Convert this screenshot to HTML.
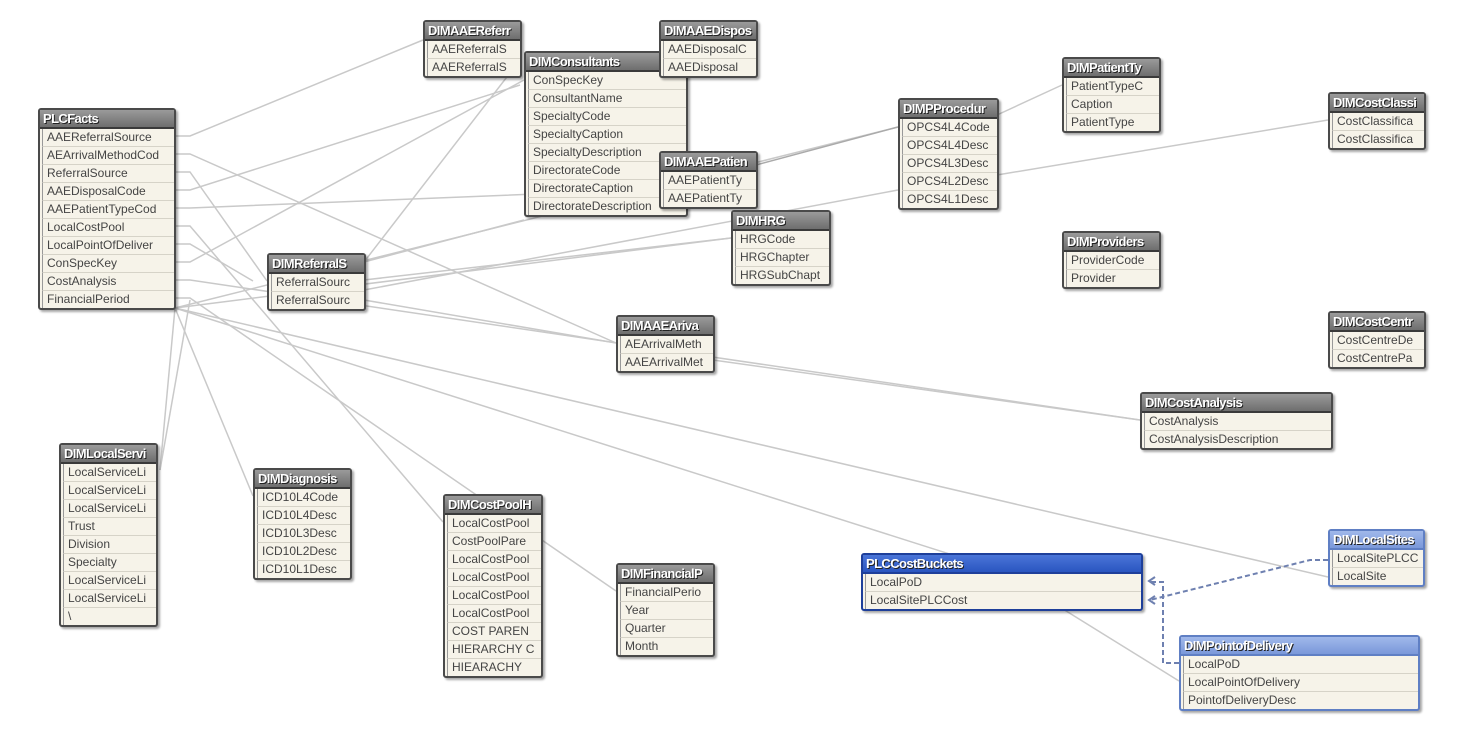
<!DOCTYPE html>
<html><head><meta charset="utf-8"><style>
body{margin:0;width:1462px;height:732px;background:#fff;position:relative;overflow:hidden;font-family:"Liberation Sans",sans-serif}
svg{position:absolute;left:0;top:0}
.t{position:absolute;border:2px solid #4a4a4a;border-radius:3px;background:#f6f3e9;box-shadow:2px 2px 2px rgba(0,0,0,.35)}
.t .h{height:17px;line-height:17px;background:linear-gradient(#9a9a9a,#6e6e6e);color:#fff;font-weight:bold;font-size:13px;padding-left:3px;letter-spacing:-.6px;text-shadow:1px 1px 0 #222;border-bottom:2px solid #3a3a3a;white-space:nowrap;overflow:hidden}
.t .r{height:17px;line-height:17px;border-bottom:1px solid #d6d3c8;font-size:12px;color:#444;padding-left:4px;white-space:nowrap;overflow:hidden;margin-left:2px;border-left:1px solid #999}
.t .r:last-child{border-bottom:none}
.b{border-color:#1e3f9a}
.b .h{background:linear-gradient(#4a75d8,#2a55c0);border-bottom-color:#1e3f9a}
.lb{border-color:#5f7fc4}
.lb .h{background:linear-gradient(#a0b8ea,#7a98da);border-bottom-color:#5f7fc4}
</style></head><body>
<svg width="1462" height="732" fill="none" stroke="#c9c9c9" stroke-width="1.5">
<path d="M175 136H190L423 40"/>
<path d="M175 154H190L616 343"/>
<path d="M175 172H190L267 281"/>
<path d="M175 190H190L520 85"/>
<path d="M175 208H190L659 189"/>
<path d="M175 226H190L443 522"/>
<path d="M175 244H190L253 281"/>
<path d="M175 262H190L524 80"/>
<path d="M175 280H190L1140 420"/>
<path d="M175 298H190L616 591"/>
<path d="M175 308L160 470"/>
<path d="M175 308L253 496"/>
<path d="M175 308L1328 577"/>
<path d="M175 308L1000 570L1179 681"/>
<path d="M175 308L731 238"/>
<path d="M175 308L898 127"/>
<path d="M364 262L524 220"/>
<path d="M364 280L731 238"/>
<path d="M364 290L898 190"/>
<path d="M364 300L616 343"/>
<path d="M997 175L1328 120"/>
<path d="M997 115L1062 85"/>
<path d="M713 360L1140 420"/>
<path d="M756 165L898 127" stroke="#aaa"/>
<path d="M364 262L520 60"/>
<path d="M160 470L190 300"/>
</svg>
<svg width="1462" height="732" fill="none" stroke="#6e80b0" stroke-width="2" stroke-dasharray="5,3">
<path d="M1328 560H1310L1150 600"/>
<path d="M1179 663H1163V582H1150"/>
<path d="M1155 577l-6 4 6 4M1155 596l-6 4 6 4" stroke-dasharray="none"/>
</svg>

<div class="t" style="left:38px;top:108px;width:134px"><div class="h">PLCFacts</div><div class="r">AAEReferralSource</div><div class="r">AEArrivalMethodCod</div><div class="r">ReferralSource</div><div class="r">AAEDisposalCode</div><div class="r">AAEPatientTypeCod</div><div class="r">LocalCostPool</div><div class="r">LocalPointOfDeliver</div><div class="r">ConSpecKey</div><div class="r">CostAnalysis</div><div class="r">FinancialPeriod</div></div>
<div class="t" style="left:423px;top:20px;width:95px"><div class="h">DIMAAEReferr</div><div class="r">AAEReferralS</div><div class="r">AAEReferralS</div></div>
<div class="t" style="left:524px;top:51px;width:160px"><div class="h">DIMConsultants</div><div class="r">ConSpecKey</div><div class="r">ConsultantName</div><div class="r">SpecialtyCode</div><div class="r">SpecialtyCaption</div><div class="r">SpecialtyDescription</div><div class="r">DirectorateCode</div><div class="r">DirectorateCaption</div><div class="r">DirectorateDescription</div></div>
<div class="t" style="left:659px;top:20px;width:95px"><div class="h">DIMAAEDispos</div><div class="r">AAEDisposalC</div><div class="r">AAEDisposal</div></div>
<div class="t" style="left:659px;top:151px;width:95px"><div class="h">DIMAAEPatien</div><div class="r">AAEPatientTy</div><div class="r">AAEPatientTy</div></div>
<div class="t" style="left:731px;top:210px;width:96px"><div class="h">DIMHRG</div><div class="r">HRGCode</div><div class="r">HRGChapter</div><div class="r">HRGSubChapt</div></div>
<div class="t" style="left:898px;top:98px;width:97px"><div class="h">DIMPProcedur</div><div class="r">OPCS4L4Code</div><div class="r">OPCS4L4Desc</div><div class="r">OPCS4L3Desc</div><div class="r">OPCS4L2Desc</div><div class="r">OPCS4L1Desc</div></div>
<div class="t" style="left:1062px;top:57px;width:95px"><div class="h">DIMPatientTy</div><div class="r">PatientTypeC</div><div class="r">Caption</div><div class="r">PatientType</div></div>
<div class="t" style="left:1328px;top:92px;width:94px"><div class="h">DIMCostClassi</div><div class="r">CostClassifica</div><div class="r">CostClassifica</div></div>
<div class="t" style="left:1062px;top:231px;width:95px"><div class="h">DIMProviders</div><div class="r">ProviderCode</div><div class="r">Provider</div></div>
<div class="t" style="left:1328px;top:311px;width:94px"><div class="h">DIMCostCentr</div><div class="r">CostCentreDe</div><div class="r">CostCentrePa</div></div>
<div class="t" style="left:267px;top:253px;width:95px"><div class="h">DIMReferralS</div><div class="r">ReferralSourc</div><div class="r">ReferralSourc</div></div>
<div class="t" style="left:616px;top:315px;width:95px"><div class="h">DIMAAEAriva</div><div class="r">AEArrivalMeth</div><div class="r">AAEArrivalMet</div></div>
<div class="t" style="left:1140px;top:392px;width:189px"><div class="h">DIMCostAnalysis</div><div class="r">CostAnalysis</div><div class="r">CostAnalysisDescription</div></div>
<div class="t" style="left:59px;top:443px;width:95px"><div class="h">DIMLocalServi</div><div class="r">LocalServiceLi</div><div class="r">LocalServiceLi</div><div class="r">LocalServiceLi</div><div class="r">Trust</div><div class="r">Division</div><div class="r">Specialty</div><div class="r">LocalServiceLi</div><div class="r">LocalServiceLi</div><div class="r">\</div></div>
<div class="t" style="left:253px;top:468px;width:95px"><div class="h">DIMDiagnosis</div><div class="r">ICD10L4Code</div><div class="r">ICD10L4Desc</div><div class="r">ICD10L3Desc</div><div class="r">ICD10L2Desc</div><div class="r">ICD10L1Desc</div></div>
<div class="t" style="left:443px;top:494px;width:96px"><div class="h">DIMCostPoolH</div><div class="r">LocalCostPool</div><div class="r">CostPoolPare</div><div class="r">LocalCostPool</div><div class="r">LocalCostPool</div><div class="r">LocalCostPool</div><div class="r">LocalCostPool</div><div class="r">COST PAREN</div><div class="r">HIERARCHY C</div><div class="r">HIEARACHY</div></div>
<div class="t" style="left:616px;top:563px;width:95px"><div class="h">DIMFinancialP</div><div class="r">FinancialPerio</div><div class="r">Year</div><div class="r">Quarter</div><div class="r">Month</div></div>
<div class="t b" style="left:861px;top:553px;width:278px"><div class="h">PLCCostBuckets</div><div class="r">LocalPoD</div><div class="r">LocalSitePLCCost</div></div>
<div class="t lb" style="left:1328px;top:529px;width:93px"><div class="h">DIMLocalSites</div><div class="r">LocalSitePLCC</div><div class="r">LocalSite</div></div>
<div class="t lb" style="left:1179px;top:635px;width:237px"><div class="h">DIMPointofDelivery</div><div class="r">LocalPoD</div><div class="r">LocalPointOfDelivery</div><div class="r">PointofDeliveryDesc</div></div>
</body></html>
